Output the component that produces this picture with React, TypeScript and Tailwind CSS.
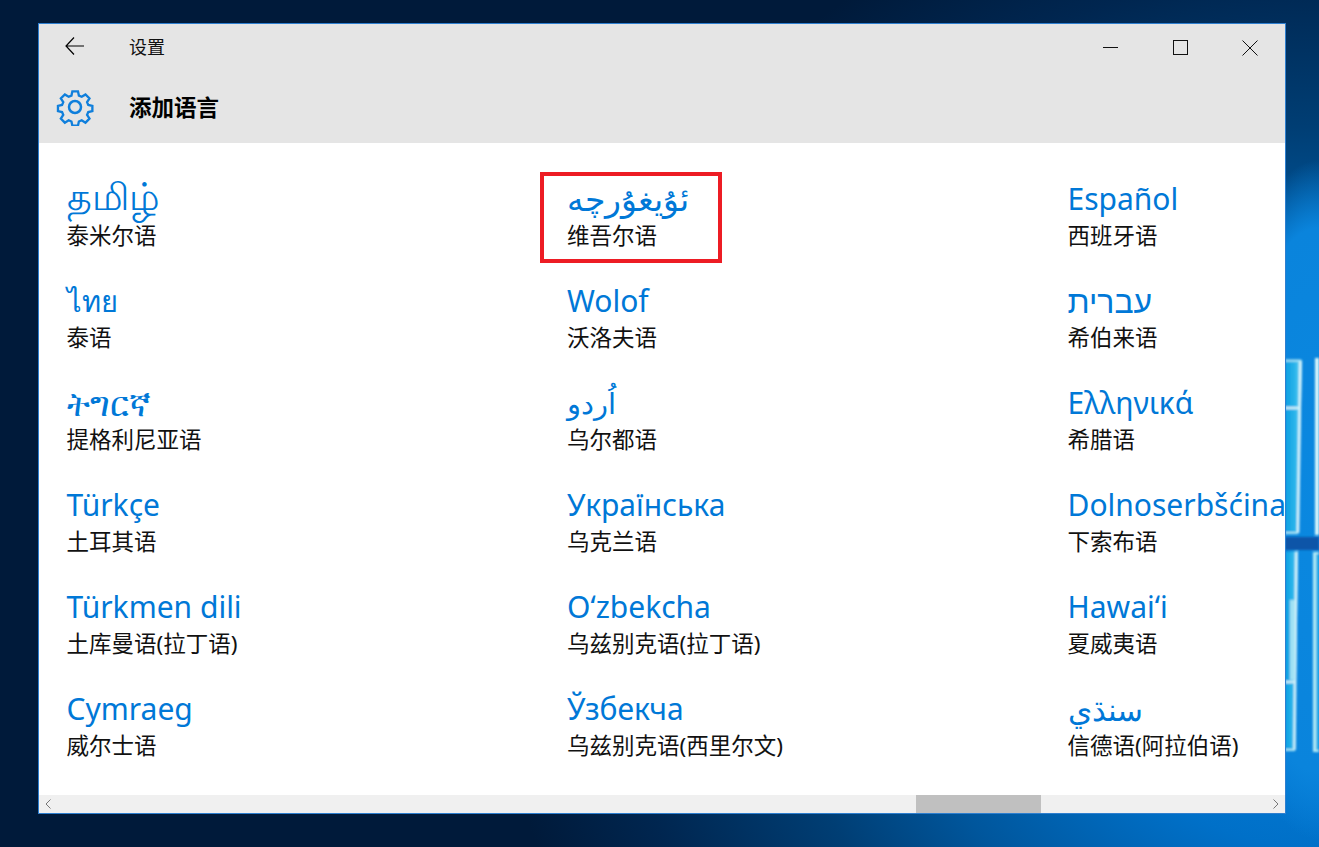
import React from 'react'

// name, chinese label, size class for scripts that come out narrower than the reference
const LANGS = [
  [
    ['தமிழ்', '泰米尔语', 'text-[38px] leading-[36px]'],
    ['ไทย', '泰语', 'text-[29px] leading-[44px]'],
    ['ትግርኛ', '提格利尼亚语', 'text-[34px] leading-[44px]'],
    ['Türkçe', '土耳其语', 'text-[30px] leading-[44px]'],
    ['Türkmen dili', '土库曼语(拉丁语)', 'text-[30px] leading-[44px]'],
    ['Cymraeg', '威尔士语', 'text-[30px] leading-[44px]'],
  ],
  [
    ['ئۇيغۇرچە', '维吾尔语', 'text-[33px] leading-[44px]'],
    ['Wolof', '沃洛夫语', 'text-[30px] leading-[44px]'],
    ['اُردو', '乌尔都语', 'text-[29px] leading-[44px]'],
    ['Українська', '乌克兰语', 'text-[30px] leading-[44px]'],
    ['Oʻzbekcha', '乌兹别克语(拉丁语)', 'text-[30px] leading-[44px]'],
    ['Ўзбекча', '乌兹别克语(西里尔文)', 'text-[30px] leading-[44px]'],
  ],
  [
    ['Español', '西班牙语', 'text-[30px] leading-[44px]'],
    ['עברית', '希伯来语', 'text-[32px] leading-[44px]'],
    ['Ελληνικά', '希腊语', 'text-[30px] leading-[44px]'],
    ['Dolnoserbšćina', '下索布语', 'text-[30px] leading-[44px]'],
    ['Hawaiʻi', '夏威夷语', 'text-[30px] leading-[44px]'],
    ['سنڌي', '信德语(阿拉伯语)', 'text-[31px] leading-[44px]'],
  ],
]

const Wallpaper = () => (
  <svg className="absolute inset-0 w-full h-full" viewBox="0 0 1319 847" preserveAspectRatio="none">
    <defs>
      <radialGradient id="base" gradientUnits="userSpaceOnUse" cx="0" cy="0" r="1" gradientTransform="translate(1319 620) scale(820 760)">
        <stop offset="0" stopColor="#0a86e4" />
        <stop offset="0.3" stopColor="#0070c8" />
        <stop offset="0.5" stopColor="#00569c" />
        <stop offset="0.65" stopColor="#003e74" />
        <stop offset="0.85" stopColor="#002650" />
        <stop offset="1" stopColor="#001a3a" />
      </radialGradient>
      <radialGradient id="side" gradientUnits="userSpaceOnUse" cx="0" cy="0" r="1" gradientTransform="translate(1319 500) scale(110 340)">
        <stop offset="0" stopColor="#0a88e0" />
        <stop offset="0.8" stopColor="#0a84dc" />
        <stop offset="1" stopColor="#0a84dc" stopOpacity="0" />
      </radialGradient>
      <linearGradient id="pane" x1="0" y1="0" x2="1" y2="0">
        <stop offset="0" stopColor="#0a9ce0" />
        <stop offset="0.65" stopColor="#30b8ec" />
        <stop offset="1" stopColor="#a0e4f6" />
      </linearGradient>
      <filter id="soft"><feGaussianBlur stdDeviation="0.8" /></filter>
    </defs>
    <rect width="1319" height="847" fill="#001a3a" />
    <rect width="1319" height="847" fill="url(#base)" />
    <rect x="1180" y="160" width="139" height="687" fill="url(#side)" />
    <g filter="url(#soft)">
      <polygon points="1285,361 1302,360 1298,533 1285,534" fill="url(#pane)" />
      <path d="M1300.500 361 1298 533" stroke="#e0f8fd" strokeWidth="2.500" />
      <path d="M1285 408h16" stroke="#d4f2fa" strokeWidth="2.500" />
      <path d="M1285 360.500h16" stroke="#b0e8f6" strokeWidth="2" />
      <path d="M1285 533h13" stroke="#b0e8f6" strokeWidth="2" />
      <rect x="1285" y="537" width="34" height="13" fill="#0a55a8" />
      <polygon points="1285,552 1298,551 1295,750 1285,750" fill="url(#pane)" />
      <path d="M1296.500 552 1294.500 750" stroke="#d8f4fb" strokeWidth="2.500" />
      <path d="M1290 600h5v80h-5z" fill="#a0e2f4" />
      <path d="M1285 682h11" stroke="#d4f2fa" strokeWidth="2.500" />
      <path d="M1285 750h10" stroke="#b0e8f6" strokeWidth="2" />
      <rect x="1315" y="358" width="4" height="177" fill="#d8f8fd" />
      <rect x="1313" y="552" width="6" height="200" fill="#b4ecf8" />
      <rect x="1316" y="554" width="3" height="196" fill="#2cb0e8" />
    </g>
  </svg>
)

export default function App() {
  return (
    <div className="relative w-[1319px] h-[847px] overflow-hidden pl-[38px] pt-[23px] font-['Noto_Sans','Noto_Sans_CJK_SC',sans-serif]">
      <Wallpaper />
      <div className="relative flex flex-col w-[1248px] h-[791px] bg-white border border-[#2d7fd0] overflow-hidden">
        {/* title bar */}
        <div className="bg-[#e5e5e5] h-[119px] shrink-0">
          <div className="flex items-center h-[46px] text-[#111]">
            <svg className="ml-[26px] mb-[2px] w-[19px] h-[18px]" viewBox="0 0 19 18" fill="none" stroke="#000" strokeWidth="1.200">
              <path d="M9 .5 1 9l8 8.500M1 9h18" />
            </svg>
            <span className="ml-[45px] text-[18px]">设置</span>
            <svg className="ml-auto mt-[2px] w-[16px] h-[16px] mr-[54px]" viewBox="0 0 16 16" stroke="#111" strokeWidth="1">
              <path d="M0 7.500h15" />
            </svg>
            <svg className="mt-[2px] w-[16px] h-[16px] mr-[53px]" viewBox="0 0 16 16" fill="none" stroke="#111" strokeWidth="1">
              <rect x=".5" y=".5" width="14" height="14" />
            </svg>
            <svg className="mt-[2px] w-[16px] h-[16px] mr-[27px]" viewBox="0 0 16 16" stroke="#111" strokeWidth="1">
              <path d="M.5.5l15 15M15.500.5l-15 15" />
            </svg>
          </div>
          <div className="flex items-center h-[38px] mt-[18px]">
            <svg className="ml-[17px] w-[38px] h-[38px]" viewBox="0 0 38 38" fill="none" stroke="#0f7fdc" strokeWidth="2.500">
              <circle cx="19" cy="19" r="6" />
              <path d="M16 2.500h6l1 4.600 3 1.300 4.100-2.600 4.300 4.300-2.600 4 1.300 3.100 4.400 1v5.600l-4.400 1-1.300 3.100 2.600 4-4.300 4.300-4.100-2.600-3 1.300-1 4.600h-6l-1-4.600-3-1.300-4.100 2.600-4.300-4.300 2.600-4-1.300-3.100-4.400-1v-5.600l4.400-1 1.300-3.100-2.600-4 4.300-4.300 4.100 2.600 3-1.300z" transform="translate(1.500 1) scale(.93)" />
            </svg>
            <span className="ml-[35px] pt-[3px] text-[22.5px] leading-none font-bold text-black">添加语言</span>
          </div>
        </div>

        {/* language list */}
        <div className="flex-1 min-h-0 overflow-hidden flex pl-[27.5px] pt-[34px]">
          {LANGS.map((col, c) => (
            <div key={c} className="w-[500.5px] shrink-0 flex flex-col gap-[22px]">
              {col.map(([name, zh, size], r) => (
                <div key={name} className="relative h-[80px]">
                  <div className={`${size} h-[44px] text-[#0078d7] whitespace-nowrap`}>{name}</div>
                  <div className="text-[22.5px] leading-[30px] text-[#111] whitespace-nowrap">{zh}</div>
                  {c === 1 && r === 0 && (
                    <div className="absolute -left-[27px] -top-[5px] w-[182px] h-[91px] border-4 border-[#ed1c24]" />
                  )}
                </div>
              ))}
            </div>
          ))}
        </div>

        {/* horizontal scrollbar */}
        <div className="relative h-[18px] shrink-0 bg-[#f0f0f0] flex items-center justify-between px-[6px]">
          <svg className="w-[6px] h-[10px]" viewBox="0 0 6 10" fill="none" stroke="#777" strokeWidth="1">
            <path d="M5.500.5 1 5l4.500 4.500" />
          </svg>
          <div className="absolute top-0 left-[877px] w-[125px] h-[18px] bg-[#c0c0c0]" />
          <svg className="w-[6px] h-[10px]" viewBox="0 0 6 10" fill="none" stroke="#777" strokeWidth="1">
            <path d="M.5.5 5 5 .5 9.500" />
          </svg>
        </div>
      </div>
    </div>
  )
}
